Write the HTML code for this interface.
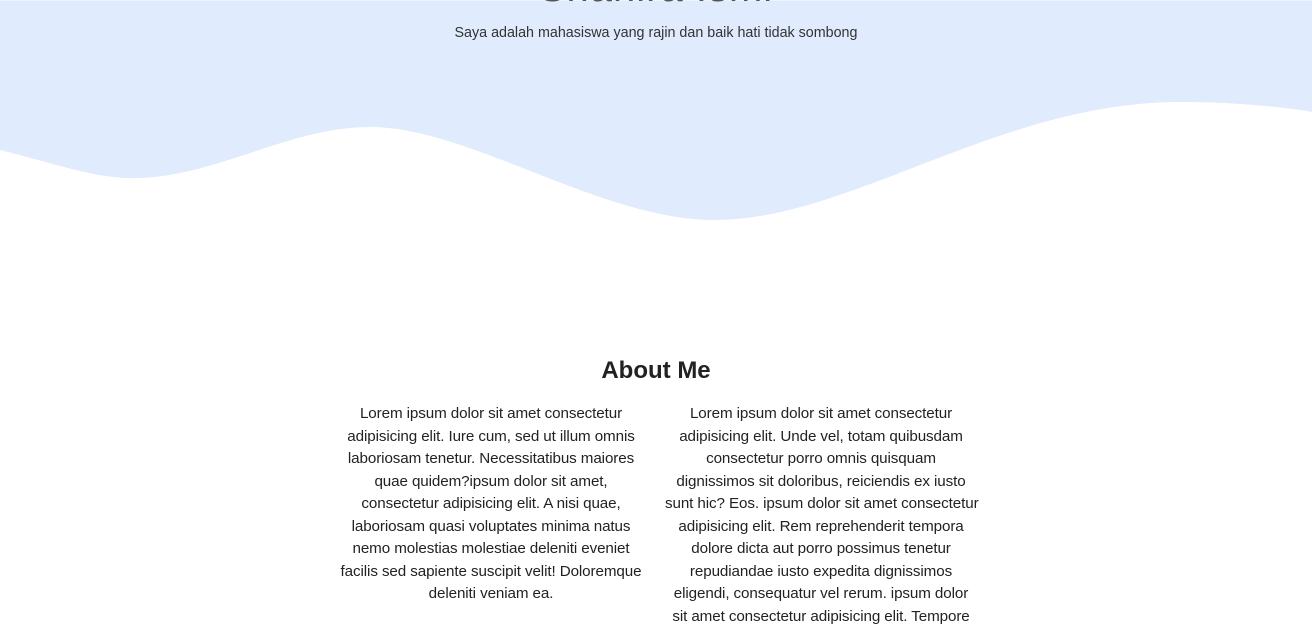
<!DOCTYPE html>
<html><head><style>
body{margin:0;width:1312px;height:628px;overflow:hidden;background:#fff;font-family:"Liberation Sans",sans-serif;position:relative;color:#222}
.bg{position:absolute;left:0;top:0;width:1312px;height:260px;background:#e0ebfd;border-top:1px solid #eef3fb}
svg{position:absolute;left:0;top:0}
.title{position:absolute;top:-34px;left:0;width:1312px;text-align:center;font-size:40px;font-weight:normal;color:#555;letter-spacing:1px}
.sub{position:absolute;top:25px;left:0;width:1312px;text-align:center;font-size:14.3px;color:#333}
h2{position:absolute;top:357px;left:0;width:1312px;text-align:center;margin:0;font-size:24px;font-weight:bold;color:#222}
.col{position:absolute;top:403px;text-align:center;font-size:15.2px;line-height:22.5px;white-space:nowrap;letter-spacing:-0.1px;color:#222}
</style></head><body>
<div class="bg"></div>
<svg width="1312" height="628" viewBox="0 0 1312 628"><path d="M0,150 C60,165 100,180 140,178 C220,175 290,127 370,127 C470,127 600,220 715,220 C850,220 1000,102 1180,102 C1240,102 1290,108 1312,112 L1312,628 L0,628 Z" fill="#fff"/></svg>
<div class="title">Shahira Ismi</div>
<div class="sub">Saya adalah mahasiswa yang rajin dan baik hati tidak sombong</div>
<h2>About Me</h2>
<div class="col" style="left:340px;width:302px">Lorem ipsum dolor sit amet consectetur<br>adipisicing elit. Iure cum, sed ut illum omnis<br>laboriosam tenetur. Necessitatibus maiores<br>quae quidem?ipsum dolor sit amet,<br>consectetur adipisicing elit. A nisi quae,<br>laboriosam quasi voluptates minima natus<br>nemo molestias molestiae deleniti eveniet<br>facilis sed sapiente suscipit velit! Doloremque<br>deleniti veniam ea.</div>
<div class="col" style="left:665px;width:312px">Lorem ipsum dolor sit amet consectetur<br>adipisicing elit. Unde vel, totam quibusdam<br>consectetur porro omnis quisquam<br>dignissimos sit doloribus, reiciendis ex iusto<br>sunt hic? Eos. ipsum dolor sit amet consectetur<br>adipisicing elit. Rem reprehenderit tempora<br>dolore dicta aut porro possimus tenetur<br>repudiandae iusto expedita dignissimos<br>eligendi, consequatur vel rerum. ipsum dolor<br>sit amet consectetur adipisicing elit. Tempore</div>
</body></html>
